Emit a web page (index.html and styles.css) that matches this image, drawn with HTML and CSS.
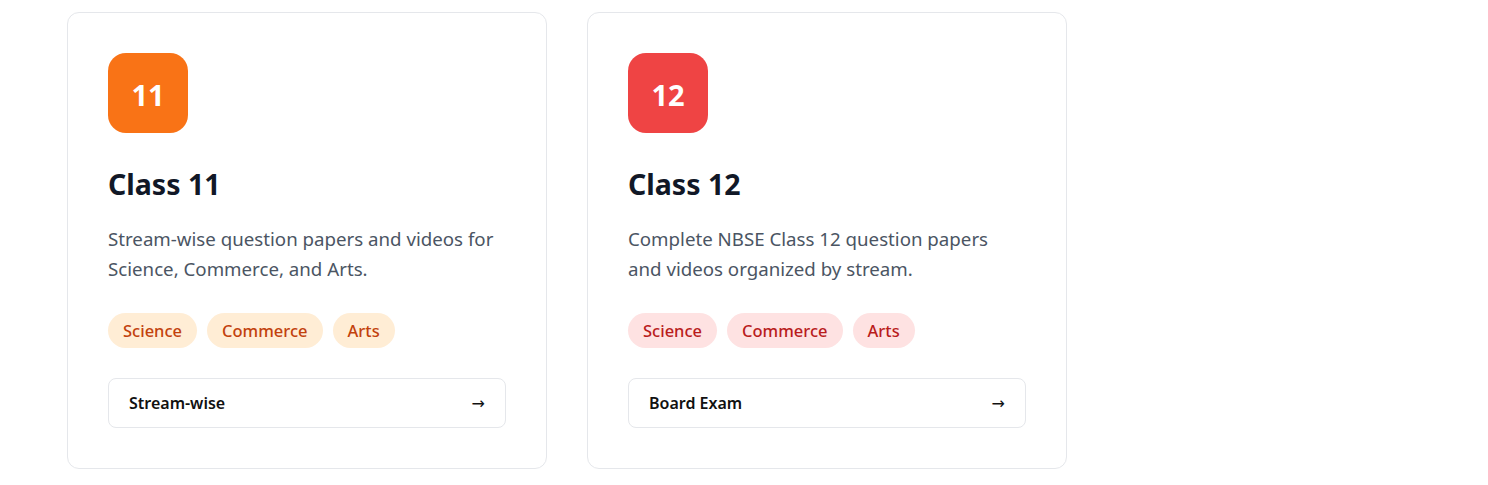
FILE: index.html
```html
<!DOCTYPE html>
<html lang="en">
<head>
<meta charset="utf-8">
<title>Classes</title>
<link rel="stylesheet" href="styles.css">
</head>
<body>
<div class="grid">
  <div class="card">
    <div class="badge badge-orange">11</div>
    <h3 class="title">Class 11</h3>
    <p class="desc">Stream-wise question papers and videos for Science, Commerce, and Arts.</p>
    <div class="tags">
      <span class="tag tag-orange">Science</span>
      <span class="tag tag-orange">Commerce</span>
      <span class="tag tag-orange">Arts</span>
    </div>
    <a class="btn" href="#"><span>Stream-wise</span><span class="arrow">→</span></a>
  </div>
  <div class="card">
    <div class="badge badge-red">12</div>
    <h3 class="title">Class 12</h3>
    <p class="desc">Complete NBSE Class 12 question papers and videos organized by stream.</p>
    <div class="tags">
      <span class="tag tag-red">Science</span>
      <span class="tag tag-red">Commerce</span>
      <span class="tag tag-red">Arts</span>
    </div>
    <a class="btn" href="#"><span>Board Exam</span><span class="arrow">→</span></a>
  </div>
</div>
</body>
</html>
```
FILE: styles.css
```css
* { box-sizing: border-box; }
body {
  margin: 0;
  background: #ffffff;
  font-family: "Noto Sans", "Open Sans", sans-serif;
  color: #111827;
}
.grid {
  display: grid;
  grid-template-columns: 480px 480px;
  gap: 40px;
  padding: 12px 0 0 67px;
}
.card {
  border: 1px solid #e5e7eb;
  border-radius: 12px;
  padding: 40px;
  background: #fff;
  display: flex;
  flex-direction: column;
}
.badge {
  width: 80px;
  height: 80px;
  border-radius: 18px;
  display: flex;
  align-items: center;
  justify-content: center;
  color: #fff;
  font-size: 29px;
  font-weight: 700;
  padding-top: 2px;
}
.badge-orange { background: #f97316; }
.badge-red { background: #ef4444; }
.title {
  margin: 33px 0 0;
  font-size: 28.5px;
  line-height: 36px;
  font-weight: 700;
  color: #111827;
}
.desc {
  margin: 22px 0 0;
  font-size: 18.7px;
  line-height: 30px;
  color: #4b5563;
}
.tags {
  display: flex;
  gap: 10px;
  margin-top: 29px;
}
.tag {
  height: 35px;
  padding: 0 15px;
  border-radius: 999px;
  display: flex;
  align-items: center;
  font-size: 16.5px;
  font-weight: 500;
}
.tag-orange { background: #ffedd5; color: #c2410c; }
.tag-red { background: #fee2e2; color: #b91c1c; }
.btn {
  margin-top: 30px;
  height: 50px;
  border: 1px solid #e5e7eb;
  border-radius: 8px;
  padding: 0 20px;
  display: flex;
  align-items: center;
  justify-content: space-between;
  text-decoration: none;
  color: #111111;
  font-size: 16px;
  font-weight: 600;
}
.arrow {
  font-family: "DejaVu Sans", sans-serif;
  font-weight: 400;
  font-size: 16px;
}
```
